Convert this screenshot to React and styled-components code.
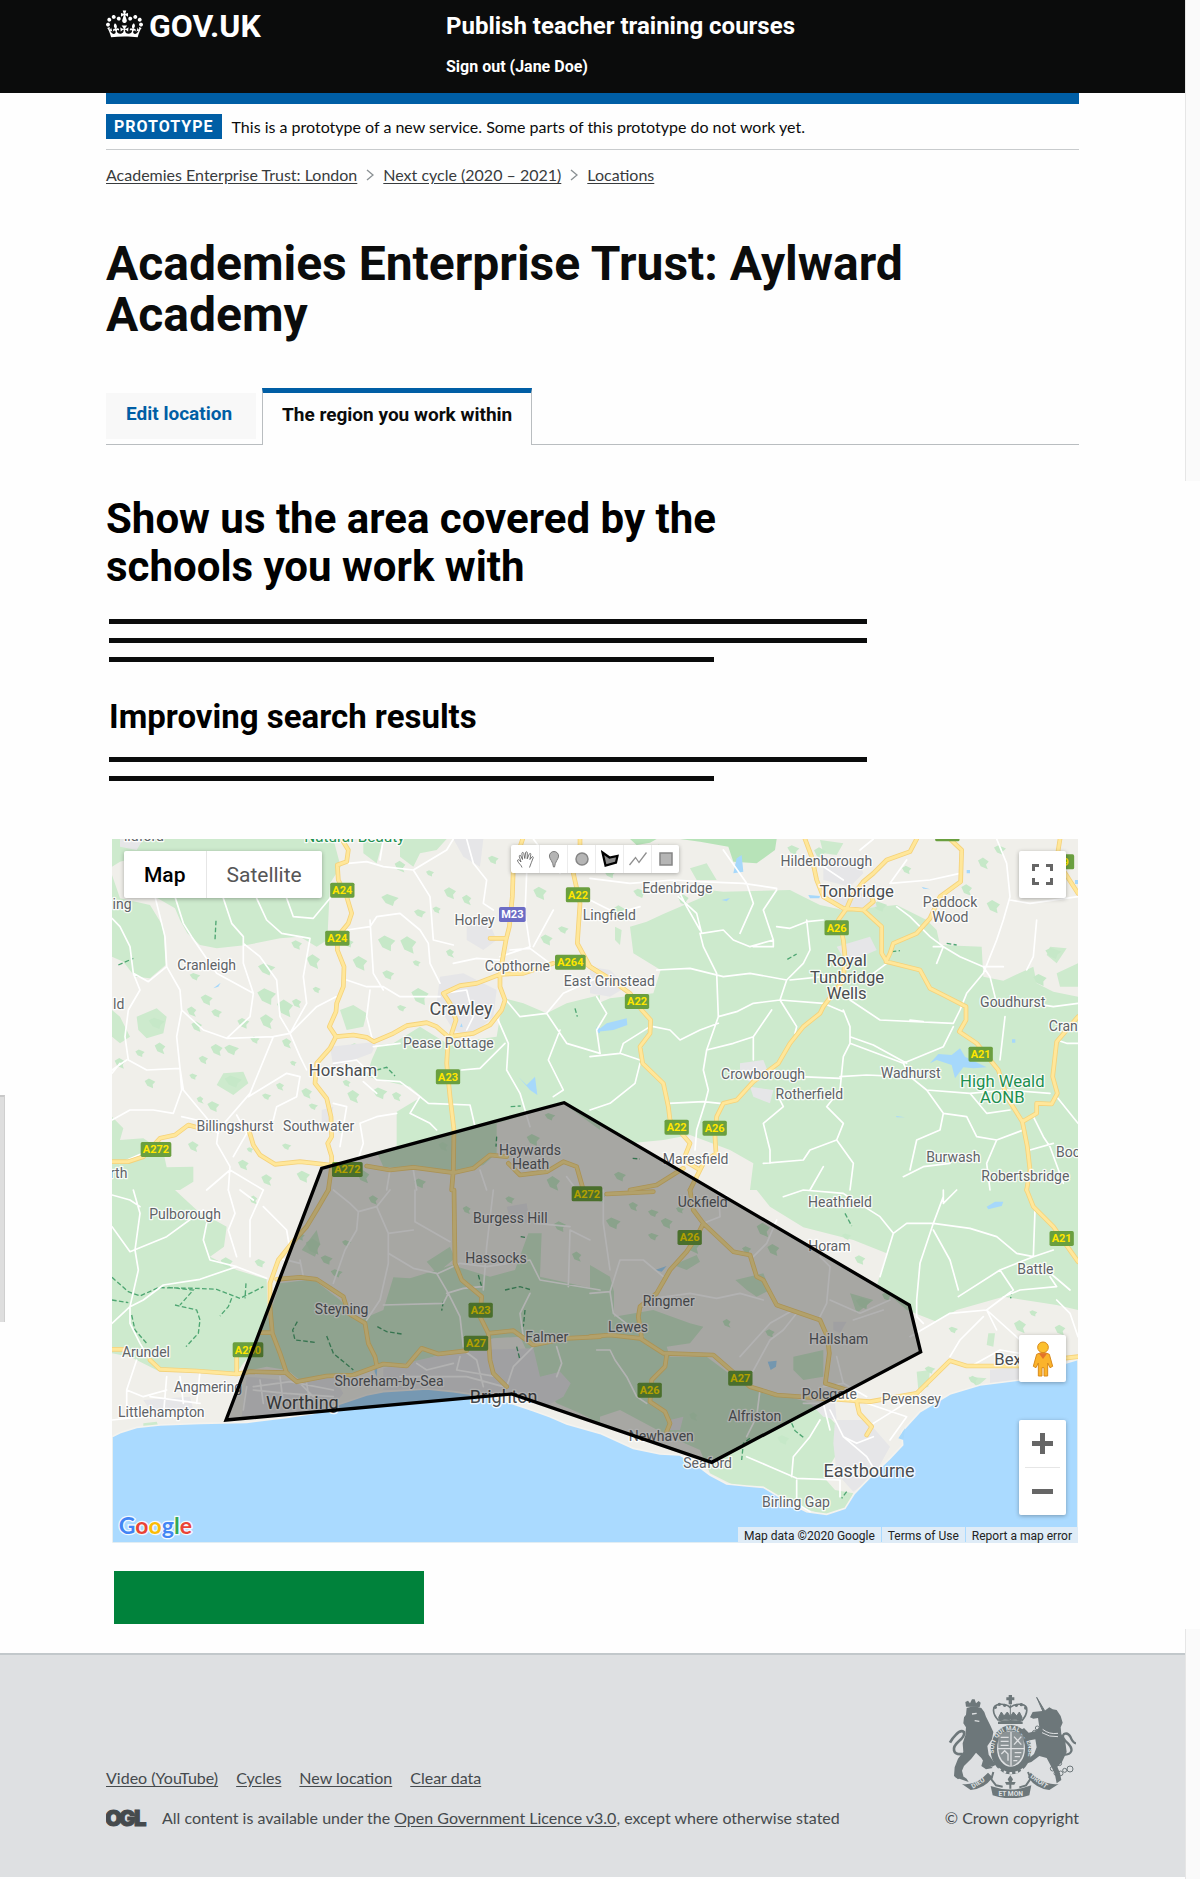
import React from "react";
import styled, { createGlobalStyle, css } from "styled-components";

const Global = createGlobalStyle`
  *, *::before, *::after { box-sizing: border-box; }
  body { margin: 0; background: #fefefe; color: #0b0c0c; font-family: Lato, "Liberation Sans", sans-serif; font-size: 16px; line-height: 20px; }
  h1, h2, h3, p, ul, ol { margin: 0; padding: 0; }
  ul, ol { list-style: none; }
  button { font: inherit; border: 0; padding: 0; margin: 0; cursor: pointer; }
  svg { display: block; }
`;
const display = `font-family: Roboto, "Liberation Sans", sans-serif; font-weight: 700;`;

/* ---------- page frame ---------- */
const Shell = styled.div`
  position: relative;
  display: grid;
  grid-template-columns: minmax(0, 1fr) 15px;
`;
const Page = styled.div`
  display: flex;
  flex-direction: column;
`;
const Gutter = styled.div`
  display: flex;
  flex-direction: column;
  justify-content: space-between;
`;
const Track = styled.div`
  height: ${(p) => p.$h}px;
  background: #fafafa;
  border-left: 1px solid #e6e6e6;
`;
const EdgeHandle = styled.div`
  position: absolute;
  left: 0;
  top: 1095px;
  width: 5px;
  height: 227px;
  background: #dedede;
  border-top: 2px solid #c8c8c8;
  border-right: 1px solid #cfcfcf;
`;
const Container = styled.div`
  width: calc(100% - 30px);
  max-width: 973px;
  margin: 0 auto;
`;

/* ---------- header ---------- */
const Header = styled.header`
  background: #0b0c0c;
  color: #fff;
  height: 93px;
`;
const HeaderGrid = styled(Container)`
  display: grid;
  grid-template-columns: 340px 1fr;
`;
const Brand = styled.a`
  ${display}
  display: flex;
  gap: 6px;
  padding-top: 10px;
  color: #fff;
  font-size: 32px;
  line-height: 32px;
  text-decoration: none;
`;
const ServiceNav = styled.nav`
  display: flex;
  flex-direction: column;
  align-items: flex-start;
  gap: 16px;
  padding-top: 11px;
`;
const ServiceLink = styled.a`
  ${display}
  color: #fff;
  text-decoration: none;
  font-size: ${(p) => (p.$large ? 24 : 16)}px;
  line-height: ${(p) => (p.$large ? 30 : 20)}px;
`;
const BlueBar = styled.div`
  height: 11px;
  background: #005ea5;
`;

/* ---------- phase banner and breadcrumbs ---------- */
const Phase = styled.div`
  display: flex;
  align-items: center;
  gap: 10px;
  padding: 10px 0;
  border-bottom: 1px solid #c8cbcd;
`;
const Tag = styled.strong`
  ${display}
  background: #005ea5;
  color: #fff;
  letter-spacing: 1px;
  padding: 0 8px;
  line-height: 25px;
`;
const Crumbs = styled.ol`
  display: flex;
  margin-top: 15px;
`;
const Crumb = styled.li`
  display: flex;
  align-items: center;
  svg { margin: 0 9px; }
`;
const TextLink = styled.a`
  color: ${(p) => p.$color || "#383b3d"};
  text-decoration: underline;
  text-underline-offset: 2px;
`;

/* ---------- headings, tabs ---------- */
const Title = styled.h1`
  ${display}
  margin-top: 53px;
  font-size: 48px;
  line-height: 51px;
`;
const Tabs = styled.ul`
  display: flex;
  align-items: flex-end;
  gap: 6px;
  margin-top: 48px;
  border-bottom: 1px solid #b9bdc0;
`;
const Tab = styled.li`
  a {
    ${display}
    display: block;
    padding: 0 24px 0 20px;
    font-size: 19px;
    text-decoration: none;
    line-height: 42px;
    height: 46px;
    color: #005ea5;
    background: #f8f8f8;
    margin-bottom: 5px;
  }
  ${(p) => p.$active && css`
    margin-bottom: -1px;
    a {
      height: 57px;
      margin: 0;
      padding: 0 19px;
      line-height: 44px;
      color: #0b0c0c;
      background: #fefefe;
      border: 1px solid #b9bdc0;
      border-top: 5px solid #005ea5;
      border-bottom: 0;
    }
  `}
`;
const Heading = styled.h2`
  ${display}
  max-width: 640px;
  margin-top: 50px;
  color: #000;
  font-size: 42px;
  line-height: 48px;
`;
const SubHeading = styled.h3`
  ${display}
  margin: 35px 0 20px;
  color: #000;
  font-size: 33px;
  line-height: 40px;
`;
const Copy = styled.div`
  padding-left: 3px;
`;
const Lines = styled.div`
  display: flex;
  flex-direction: column;
  gap: 14px;
  margin-top: ${(p) => (p.$first ? 28 : 0)}px;
`;
const Line = styled.div`
  height: 5px;
  max-width: ${(p) => (p.$short ? 605 : 758)}px;
  background: #0b0c0c;
`;

/* ---------- map widgets ---------- */
const MapFrame = styled.section`
  position: relative;
  margin: 58px 1px 0 6px;
  overflow: hidden;
  background: #aadaff;
  font-family: Roboto, sans-serif;
  > svg { width: 100%; height: auto; }
`;
const Floating = styled.div`
  position: absolute;
  display: flex;
  background: #fff;
  border-radius: 2px;
  box-shadow: 0 1px 4px rgba(0, 0, 0, 0.3);
`;
const TypeSwitch = styled(Floating)`
  top: 12px;
  left: 12px;
`;
const TypeButton = styled.button`
  height: 47px;
  padding: 0 20px;
  background: none;
  font-size: 21px;
  color: ${(p) => (p.$on ? "#000" : "#565656")};
  font-weight: ${(p) => (p.$on ? 500 : 400)};
  & + & { border-left: 1px solid #e6e6e6; }
`;
const DrawTools = styled(Floating)`
  top: 6px;
  left: 50%;
  margin-left: -84px;
`;
const DrawButton = styled.button`
  display: grid;
  place-items: center;
  width: 28px;
  height: 28px;
  background: none;
  & + & { border-left: 1px solid #ececec; }
`;
const SideControl = styled(Floating)`
  right: 12px;
  width: 47px;
  flex-direction: column;
  align-items: center;
  ${(p) => (p.$top ? `top: ${p.$top}px;` : `bottom: ${p.$bottom}px;`)}
`;
const SideButton = styled.button`
  display: grid;
  place-items: center;
  width: 35px;
  height: 47px;
  background: none;
  & + & { border-top: 1px solid #e6e6e6; height: 48px; }
`;
const Attribution = styled(Floating)`
  right: 0;
  bottom: 0;
  gap: 1px;
  background: none;
  box-shadow: none;
  font-size: 12px;
  line-height: 18px;
`;
const Credit = styled.span`
  height: 16px;
  padding: 0 6px;
  background: #dfecf7;
  color: #222;
  a { color: inherit; text-decoration: none; }
`;

/* ---------- action and footer ---------- */
const Submit = styled.button`
  display: block;
  width: 310px;
  height: 53px;
  margin: 28px 0 29px 8px;
  background: #00823b;
`;
const Footer = styled.footer`
  background: #dee0e2;
  border-top: 2px solid #c2c8cb;
  color: #454a4d;
  padding: 39px 0 49px;
  margin-bottom: 2px;
`;
const FooterRow = styled(Container)`
  display: flex;
  justify-content: space-between;
  align-items: flex-end;
`;
const FooterLinks = styled.ul`
  display: flex;
  gap: 18px;
  margin-bottom: 20px;
`;
const Licence = styled.div`
  display: flex;
  align-items: center;
  gap: 14px;
`;
const Copyright = styled.a`
  display: flex;
  flex-direction: column;
  align-items: center;
  gap: 10px;
  color: inherit;
  text-decoration: none;
`;

/* ---------- map artwork ----------
   Four tiles, each 1470 x 1080 units, three units to a pixel. */
const TILES = [[0, 0], [1470, 0], [0, 1080], [1470, 1080]];

const GREEN = [
  `M110,27H700L722,110 690,160 682,330 650,350 600,320 540,325 440,345 350,355 300,345 262,310 240,270 225,235 165,200 110,120 80,90 60,95 36,110V27Z
   M36,135L60,205 150,225 190,290 197,405 150,445 105,440 70,395 36,380Z
   M1215,505L1270,520 1340,550 1400,520 1500,495V900L1390,820 1190,880V970L1150,1005 1060,1030 850,1010 830,965 890,950V845L965,800 930,770 800,740 815,690 835,645 880,640 960,590 1040,640 1190,620 1200,560Z
   M36,860L70,895 60,930 130,925 190,965 200,1012 280,1010V1055L240,1080H36Z
   M36,540L60,560 90,620 60,640 36,620Z M110,560L170,535 200,560 190,610 140,625 115,600Z M370,730L430,725 445,760 400,795 350,765Z
   M790,27H850L830,100 790,70Z M900,27H1040L1010,60 960,70 940,110 900,80Z M720,540L760,525 800,550 790,590 740,600Z`,
  `M120,290L170,275 220,252 330,205 355,180 400,185 600,180 640,200 690,225 760,240 850,232 920,225 1010,270 1040,300 1050,345 1175,350 1180,440 1240,452 1330,410 1340,460 1390,485 1464,500V1080H480L490,1000 420,960 300,915 220,930 120,940 0,860V530L60,505 190,490 212,420 130,370Z
   M1380,350L1430,355 1400,400 1370,375Z M690,30L760,40 740,75 700,70Z M1400,430L1464,400V470L1410,470Z M75,290L95,300 90,345 75,330Z M300,115L350,100 380,150 320,150Z`,
  `M36,0H225L290,60 380,110 372,170 330,200 410,240 500,268 505,430 430,520 410,550 180,545 90,500 36,490Z
   M540,280L640,268 720,330 780,390 850,360 880,262 930,265 1010,240 1055,225 1170,260 1245,240 1285,130 1325,130 1320,260 1500,300V700L1430,665 1370,640 1330,590 1310,545 1260,440 1180,445 1080,480 1000,500 930,525 850,530 700,560 600,570 560,540 500,530 430,545 500,400Z
   M605,180L650,120 660,160 645,200Z M980,215L1050,170 1065,205 1010,250Z M130,700L170,695 175,708 130,712Z`,
  `M0,225L60,260 72,305 72,380 190,360 300,400 340,410 300,460 230,470 240,500 350,500 430,560 520,600 650,635 690,652 735,700V800L700,860 735,900 790,910 770,955 700,975 600,940 520,890 440,890 360,850 330,780 240,740 90,660 0,690Z
   M500,0H1464V360L1400,345 1240,320 1100,360 1040,395 950,360 862,282 890,190 790,150 640,112 540,50Z
   M436,270L520,250 540,300 500,320 470,300Z M610,500L700,480V560L640,570 610,540Z M780,310L850,330 800,370Z M980,545L1020,540 1015,590 985,600Z M250,225L320,195 330,215 290,240Z M1135,560L1190,565 1160,590Z M1195,430L1215,430 1210,470 1190,465Z`,
];
const DARK_GREEN = ["", "M270,27H560L555,60 500,100 430,95 415,50 330,35Z M120,27H200L180,38 140,45Z", "", ""];
const URBAN = [
  `M1020,440L1090,430 1190,480 1180,560 1110,620 1060,600 1010,520Z M1100,280L1160,260 1190,330 1150,360 1100,330Z M690,650L830,635 815,670 760,690 700,710Z M665,840L700,830 690,880 665,880Z M60,27H130L110,60 60,50Z M1060,27H1150L1140,110 1090,80Z`,
  `M0,410L60,420 110,470 60,500 0,490Z M700,100L800,80 820,130 780,170 700,150Z M720,190L850,190 860,230 750,240Z M740,350L840,320 860,360 770,400Z M450,700L520,690 540,740 490,760 450,740Z M480,770L550,780 540,820 490,800Z`,
  `M440,560L600,575 700,560 730,610 690,660 425,680Z M850,535L1000,500 1100,480 1300,475 1320,560 1380,545 1412,580 1390,620 1335,650 1290,640 1180,612 850,600Z M1220,50L1280,40 1290,100 1230,90Z M130,630L270,620 280,660 150,660Z`,
  `M735,690L830,690 900,770 850,860 790,905 740,850 730,760Z M240,690L280,680 270,720 240,720Z M1200,540L1290,530V570L1200,580Z M730,395L770,395 750,430 730,420Z M660,640L735,640 740,690 700,680Z`,
];
const WATER = [
  `M1255,740L1280,765 1305,740 1312,795 1290,780Z M340,475L362,458 355,470Z M1490,590L1500,595V610L1488,605Z M1080,590L1085,580 1088,592Z`,
  `M18,605L50,580 110,565 112,585 70,600 22,605Z M440,85L455,75 460,125 430,130Z M1020,700L1045,672 1085,675 1110,655 1125,680 1190,712 1150,715 1120,712 1095,745 1085,705 1040,690Z M655,195L690,198 688,205 660,205Z M395,210L420,204 410,214Z M995,170L1020,178 1000,176Z M1130,120h10v10h-10Z M1455,150h9v12h-9Z M1266,628h10v10h-10Z M918,858L945,862 920,862Z`,
  `M822,500L832,530 830,560 824,545Z`,
  `M533,515L560,512 558,530 542,540Z M195,240L230,228 215,245Z M1190,50L1215,35 1240,35 1235,48 1195,58Z M925,745L945,715 940,750Z`,
];
const SEA =
  "M36,1820L60,1808 110,1792 180,1785 300,1780 440,1777 560,1762 640,1750 720,1722 800,1695 850,1685 980,1677 1060,1685 1180,1702 1240,1722 1300,1742 1350,1760 1400,1782 1500,1810 1600,1855 1680,1872 1740,1875 1790,1905 1830,1935 1880,1962 1940,1968 1990,1972 2070,2020 2120,2045 2180,2053 2235,2035 2262,1992 2310,1942 2370,1885 2408,1845 2405,1805 2460,1745 2550,1692 2640,1665 2760,1650 2860,1610 2934,1588V2139H36Z";

const MINOR = [
  `M36,265L60,290 90,350 100,430 145,455 200,410 195,320 165,200 M100,430L120,480 85,540 75,620 85,690 140,720 240,715 M36,720L80,690 M200,410L240,480 245,540 230,620 240,715 245,780 220,850 160,840 90,840 36,870
   M225,200L250,280 275,320 350,430 460,490 450,560 380,625 310,600 245,540 M370,205L395,280 430,320 430,400 460,490 M470,205L500,270 545,310 630,325 610,440 620,520 570,610 M560,205L580,260 640,265 690,205
   M430,340L480,380 530,450 540,560 570,610 650,530 708,500 M380,625L520,620 570,610 600,680 620,720 M520,620L450,790 355,900 350,940 390,1010 385,1080 M445,800L560,730 600,740 590,800 530,830 520,870 M240,715L250,780 350,900
   M690,205L720,160 M745,100L800,95 850,110 940,120 1040,60 1060,27 M740,300L810,290 830,260 900,250 960,300 985,340 990,400 1020,460 M740,450L800,470 850,470 900,500 1020,500 M810,270L820,430 850,480 M940,120L990,200 1000,330 1060,345
   M850,27L840,90 M820,640L800,560 810,480 M1100,27L1120,100 1160,150 1150,220 1180,240 M1280,130L1275,250 1290,350 1200,380 M1230,360L1290,355 1350,400 M1300,27L1340,80 1380,130 M1360,240L1300,350
   M1030,490L1100,480 1120,560 1100,600 M1060,400L1130,385 1200,390 M1190,560L1225,640 1220,720 1260,790 1290,890 M1210,500L1260,560 1340,550 1400,640 1500,670 M1340,550L1390,490 1500,440 M1380,600L1345,690 1390,780 1360,800
   M700,700L770,690 830,750 900,755 960,800 985,820 1110,825 1125,890 M790,755L830,790 M820,650L900,640 M1085,720L1140,715 1215,640 M960,800L930,850 990,880 1010,900 M780,880L830,860 890,850 M780,880L790,940 770,1000
   M700,820L740,830 720,950 M410,855L440,910 M440,910L400,980 M355,910L290,870 245,860 M36,730L60,700 M60,1000L150,960 M320,1080L390,1020 490,1080 M1400,1040L1430,1080 M870,1020L860,1080 M1140,1020L1160,1080 M940,1020L950,1080`,
  `M0,210L40,230 80,250 150,230 M0,145L120,160 250,150 330,155 460,160 560,175 M250,150L290,230 330,300 M265,200L320,250 335,310 400,300 430,330 480,350 550,330 520,240 560,180 M330,310L340,350 380,430 385,560 350,660 340,720 355,780 345,820
   M450,310L490,220 470,160 400,60 M550,330L550,350 490,350 M560,290L600,295 650,275 700,270 M200,420L300,415 400,440 480,430 590,450 640,400 660,360 650,270 M590,450L570,510 620,590 615,610 M385,560L440,545 490,520 570,510 700,520 760,545 
   M190,590L240,600 270,630 330,600 385,580 M0,680L90,670 150,690 M135,760L150,700 M135,760L60,820 0,840 M235,820L340,815 390,820 M345,820L320,900 315,960 M490,620L545,540 M350,660L430,640 490,620 490,690
   M600,450L700,440 760,460 M780,510L870,570 1090,580 1110,540 1130,490 1180,430 1220,330 1240,270 1260,200 1250,100 1220,27 M760,540L780,590 780,640 940,700 1060,650 1090,590 M780,620L850,645 950,700 M940,700L960,740 1010,780 1060,850 1050,900 980,930 960,1020
   M750,740L830,735 940,740 M780,640L760,680 750,780 710,830 760,880 740,930 660,960 640,990 520,1000 M550,720L630,740 750,745 M560,790L580,830 520,880 540,960 540,1000 M850,430L890,400 M1030,350L1060,350 1110,380 1180,410 1240,410 
   M920,230L960,260 1020,320 1060,350 M1060,350L1040,400 M1180,410L1200,440 1220,520 M1330,520L1390,530 1464,520 M1245,560L1230,690 M1060,850L1130,860 1160,920 1220,930 1300,900 M1010,780L1140,790 1250,780 1380,790 
   M1140,790L1190,850 1260,840 M1330,860L1360,920 1380,950 1420,1060 M1320,960L1390,940 M1400,800L1464,880 M940,1040L1000,1010 1080,1000 M660,1080L700,1010 M780,1080L790,1000 740,930 M1220,930L1190,1000 1200,1080
   M1260,210L1320,220 1464,200 M1340,270L1330,380 1310,420 M810,60L850,27 M700,110L760,150 M900,160L1020,150 1110,130 M950,90L900,160 M20,500L50,550 20,600 30,670 M180,590L100,640 90,670 M1400,630L1430,640 1464,640 M960,570L1000,575`,
  `M100,0L120,70 105,180 115,240 90,350 90,400 120,460 150,510 M36,110L90,185 200,140 310,60 M36,400L90,350 130,330 190,285 300,268 410,230 500,265 M320,100L310,150 330,210 410,230 M385,0L405,70 385,120 410,200 M490,0L450,90 450,200 
   M490,50L560,120 570,180 M36,15L90,30 120,50 M420,0L460,30 M700,0L750,40 775,65 770,120 735,180 700,280 M775,65L830,50 870,0 M830,50L865,130 865,220 840,330 800,390 M865,130L940,120 M945,0L945,95 1050,155 M865,190L940,235 1010,250 1045,310 1030,340 850,345
   M1015,250L1080,220 1160,230 1290,210 1320,270 1500,300 M1040,310L1090,295 1145,290 M1160,170L1180,0 M1160,170L1150,300 M1045,310L1080,380 1090,470 M1410,120L1405,290 M1410,120L1470,150 M1310,100L1410,110 M1290,310L1260,370 1270,440
   M1305,465L1240,530 1220,590 M1370,470L1385,520 1370,560 M1090,480L1130,510 1150,590 M1080,500L1070,540 1190,560 M900,560L1100,560 1210,590 M950,520L980,540 1060,520 M460,590L570,575 700,600 M460,600L560,610 700,620 M480,570L490,640 M540,560L550,640 M620,580L630,640
   M440,590L430,660 M80,600L130,620 200,600 M36,690L130,680 M110,510L80,600 80,680 M150,620L300,640 M200,560L190,680 M240,560L250,640 M300,545L290,640 M600,210L610,260 M540,205L600,220 M570,550L640,620`,
  `M0,310L60,305 70,370 160,440 M60,305L90,210 160,210 220,260 M40,0L40,100 60,240 M190,325L300,310 380,325 450,310 520,330 M20,480L60,480 75,510 110,560 140,620 170,640 M450,500L540,400 610,360 M480,560L540,450 580,420 620,370
   M510,600L500,680 470,740 M690,380L710,340 720,230 690,200 M720,330L810,370 900,330 M790,390L880,360 M560,90L530,160 490,200 M385,0L390,80 340,100 M740,500L760,580 830,620 M760,580L700,590 M580,20L640,0 760,10 870,80 910,130 M760,10L800,40 
   M910,130L870,260 M910,130L950,100 1030,100 1140,115 1220,140 1280,190 1330,200 M1060,20L1030,100 990,220 980,330 980,380 M1335,60L1330,200 M1100,0L1060,40 1060,0 M1030,120L1080,210 1105,300 M1105,320L1230,240 1330,200 1390,180 M1230,240L1270,300 1190,360 1220,420 
   M1380,260L1400,290 1290,300 1240,320 M1370,240L1440,300 M960,440L1080,370 1190,360 M980,380L1000,400 M1080,500L1110,450 1180,380 M1190,360L1290,450 1300,500 M1140,530L1230,480 1290,490 M1400,330L1440,370 1464,440 
   M720,660L760,740 830,800 860,850 M690,690L660,740 610,800 605,860 M470,800L540,830 620,865 750,870 M620,870L620,940 660,965 M750,870L750,920 M640,640L700,640 720,720 M830,640L950,680 900,750 M850,700L930,650 990,610 M760,740L800,760 850,740`,
];
const MAJOR = [
  `M725,27L745,60 740,95 712,105 715,150 740,200 755,250 745,280 712,320V360L732,410 730,470 710,520 708,545 688,590 708,620 690,655 650,700 645,760 680,805 693,860 695,920 683,940 695,980V1010L685,1080
   M708,620L760,615 800,622 822,635 880,610 920,587 980,578 1010,590 1045,620 1120,610 1170,585 1205,540 1215,510 1200,470V430 M1055,610L1068,570 1050,520 1030,490 1080,467 1130,460 1200,433 1270,430 1360,400
   M1268,27L1240,110 1237,200 1228,290 1218,330 1200,430 M1170,325H1218 M1440,27V60L1420,130 1440,220 1432,340 1470,410 1500,430 M1045,620L1040,700 1050,800 1062,900 1060,1020 1055,1080
   M36,995H85L130,980 180,925 225,915 265,885 290,892 M448,905L460,945 480,975 525,1003 600,995 690,1005 M800,1008L870,1020 940,1012 1060,1028 1120,1015 1170,975 1220,980 M1225,1000L1260,1035 1340,1025 1390,995 1430,1010 1450,1080`,
  `M645,27L665,80 680,150 700,200 760,235 820,240 875,290V370L890,395 990,420 1020,475 1060,495 1128,530V570L1108,605 1160,640 1225,720 1250,800 1297,875 1312,950 1320,1020 1310,1080
   M980,27L960,65 890,90 850,130 820,155 M770,235L785,200 820,155 M820,240L850,215 845,200 M1080,27L1115,60 1112,155 1050,200 1020,265 980,310 910,340 900,370 888,395
   M770,235L745,270 760,330 765,380 760,450 700,530 690,550 640,590 600,640 565,700 490,755 440,810 400,820 380,860 375,920 378,970 340,1000 300,1080
   M-30,390L0,410 50,440 120,490 155,540 182,570 180,610 150,650 158,700 220,760 235,830 240,870 300,940 280,990 330,1020 M120,1080L200,1065 280,1015 M1410,27L1400,90 1464,190 M1464,560L1400,635 1388,740 1402,790 1385,822 1340,820V850L1297,875`,
  `M685,0L650,60 620,110 575,160 535,210 510,280V350L517,430 540,490 560,550 590,575 M530,268L600,262 650,268 730,320 745,370 795,400 805,460 825,500 830,525
   M36,478H80 M150,510L180,538 290,543 410,552 450,545 560,548 590,575 680,558 760,555 850,522 920,528 965,475 1015,492 1100,482 M410,552V500 M480,428H517
   M1062,0L1065,220 1085,270 1145,320 1140,380 1165,430 1170,510 1180,550 1220,590 M1165,430L1240,422 1300,465 1400,445 1500,440`,
  `M0,440L60,435 150,445 220,490 370,495 480,590 560,615 700,625 840,635 980,610 1080,512 1130,528H1290 M1420,505L1464,500 M300,0L310,60 340,100 430,185 480,195 500,260 520,270 560,345 690,390 712,440 718,490 706,580 770,600
   M340,100L320,140 290,185 240,240 200,310 150,350 145,380 155,445 M230,495L225,530 185,570 180,635 225,665 240,700 230,725 M800,635L808,670 845,710 830,735 M1310,0L1330,50 1390,110 1464,215 M50,12L190,5`,
];
const TRAILS = [
  "M348,272L345,330 M55,405L100,385 M830,720L860,712 885,738 M1425,535L1432,560 M1232,830L1262,828 M1190,920L1188,950",
  "M592,388L620,372 M1070,340L1100,345 M905,365L930,362 M128,985L150,987",
  "M36,262L85,305 120,318 175,293 290,295 350,298 420,325 490,290 M205,292L280,300 240,345 M225,345L290,360 300,390 295,430 258,470 M395,325L385,350 360,378 M438,280L435,325 M36,330L85,338 M95,375L105,420 140,460 M592,395L578,420 585,450 645,457 M680,438L700,490 760,540 M832,410L860,425 905,432 M1135,255L1145,290 M1030,335L1025,362 M1215,300L1260,290 1295,300 M1275,360L1270,410 M1250,470L1260,510 M1262,140L1275,142",
  "M605,700L615,722 640,742 M480,745L460,760 455,810 M765,70L785,108 M1265,300L1262,325 M770,905L755,925",
];

/* woodland blocks scattered over the farmland: x, y, size */
const WOODS = [
  [500, 418, 26], [590, 345, 16], [640, 395, 20], [745, 340, 16], [780, 400, 22], [870, 210, 26], [860, 340, 26], [925, 345, 24], [865, 435, 18], [960, 500, 26], [905, 535, 14], [500, 500, 28], [555, 535, 24], [650, 480, 12], [590, 520, 14],
  [285, 440, 16], [320, 510, 18], [275, 545, 14], [350, 550, 16], [290, 590, 16], [170, 580, 24], [430, 580, 18], [500, 575, 20], [465, 630, 14], [350, 660, 18], [395, 660, 22], [310, 690, 14], [180, 655, 16], [120, 670, 14], [60, 700, 16],
  [400, 755, 26], [150, 760, 16], [560, 640, 14], [580, 700, 10], [540, 770, 12], [500, 800, 14], [340, 830, 18], [300, 810, 10], [280, 740, 12], [620, 790, 16], [640, 830, 14], [740, 760, 12], [760, 800, 18], [840, 790, 22], [890, 800, 14],
  [770, 655, 22], [740, 670, 16], [900, 110, 16], [990, 130, 12], [1050, 190, 18], [960, 250, 18], [1010, 240, 12], [1100, 210, 14], [1180, 90, 16], [1320, 190, 20], [1390, 300, 16], [1340, 330, 18], [1050, 370, 12], [950, 400, 12],
  [430, 1005, 16], [560, 950, 14], [610, 1040, 20], [500, 1050, 16], [450, 960, 10], [280, 950, 16], [330, 900, 12], [720, 900, 12], [790, 1040, 18], [960, 1060, 18], [1030, 950, 14], [1350, 860, 16], [1300, 930, 20], [1360, 1060, 20],
  [1530, 130, 18], [1560, 250, 24], [1620, 190, 20], [1680, 60, 18], [1750, 210, 16], [2080, 60, 18], [2160, 70, 18], [2340, 230, 22], [2420, 120, 14], [2600, 180, 16], [2700, 60, 18], [2680, 230, 20], [2860, 370, 24], [2820, 450, 20], [2650, 100, 16],
  [1540, 1180, 22], [1600, 1130, 14], [1660, 1150, 16], [1700, 1180, 18], [1780, 1250, 20], [1560, 1040, 18], [1500, 1100, 20], [1660, 1220, 16], [1740, 1140, 12], [1990, 1200, 20], [1940, 1260, 14], [2020, 1260, 18], [2240, 1220, 14], [2280, 1290, 16],
  [640, 1250, 22], [680, 1290, 18], [820, 1110, 14], [710, 1330, 18], [600, 1220, 14], [460, 1110, 12], [480, 1300, 16], [380, 1300, 18], [1440, 1100, 14], [1380, 1190, 18], [1430, 1280, 14], [1230, 1110, 14], [1100, 1140, 12], [740, 1240, 14],
  [2010, 1510, 14], [1880, 1480, 12], [2290, 1420, 22], [2360, 1400, 14], [2560, 1500, 14], [2620, 1650, 14], [2760, 1490, 18], [2800, 1450, 12], [2880, 1500, 16], [2490, 1620, 16], [2330, 1830, 12], [1780, 1760, 12], [2050, 1830, 18],
];
const wood = ([x, y, s], i) => {
  const k = (i * 7) % 5;
  const a = s * (0.7 + k * 0.1);
  return `M${x - s},${y - a / 2}L${x - s / 3 + k},${y - a} ${x + s},${y - a / 3} ${x + s / 2},${y + a / 4} ${x + s / 3 + k * 2},${y + a} ${x - s / 2},${y + a / 2}Z`;
};

/* place names: text, centre x, baseline y, size, colour */
const SMALL = 42;
const TOWN = 50;
const BIG = 54;
const PLACES = [
  ["ildford", 132, 32, SMALL], ["ing", 66, 237, SMALL], ["Cranleigh", 320, 420, SMALL], ["ld", 56, 538, SMALL], ["Horley", 1124, 286, SMALL], ["Copthorne", 1252, 423, SMALL],
  ["Crawley", 1083, 554, BIG], ["Pease Pottage", 1045, 655, SMALL], ["Horsham", 729, 738, TOWN], ["Billingshurst", 405, 902, SMALL], ["Southwater", 656, 902, SMALL],
  ["Haywards", 1290, 976, SMALL], ["Heath", 1292, 1018, SMALL], ["rth", 56, 1045, SMALL],
  ["Lingfield", 1528, 271, SMALL], ["Edenbridge", 1732, 190, SMALL], ["Hildenborough", 2179, 109, SMALL], ["Tonbridge", 2270, 202, TOWN], ["Paddock", 2550, 232, SMALL], ["Wood", 2551, 275, SMALL],
  ["East Grinstead", 1528, 468, SMALL], ["Royal", 2240, 408, TOWN], ["Tunbridge", 2241, 458, TOWN], ["Wells", 2240, 508, TOWN], ["Goudhurst", 2738, 532, SMALL], ["Cran", 2890, 602, SMALL],
  ["Crowborough", 1989, 746, SMALL], ["Rotherfield", 2128, 807, SMALL], ["Wadhurst", 2432, 743, SMALL], ["Maresfield", 1787, 1003, SMALL], ["Burwash", 2560, 997, SMALL], ["Boc", 2904, 980, SMALL], ["Robertsbridge", 2776, 1053, SMALL],
  ["Pulborough", 255, 1166, SMALL], ["Burgess Hill", 1231, 1180, SMALL], ["Hassocks", 1188, 1300, SMALL], ["Steyning", 725, 1452, SMALL], ["Falmer", 1340, 1535, SMALL], ["Arundel", 138, 1581, SMALL], ["Angmering", 324, 1687, SMALL],
  ["Shoreham-by-Sea", 867, 1669, SMALL], ["Worthing", 607, 1736, BIG], ["Brighton", 1211, 1718, BIG], ["Littlehampton", 184, 1761, SMALL],
  ["Uckfield", 1808, 1130, SMALL], ["Heathfield", 2220, 1130, SMALL], ["Horam", 2188, 1264, SMALL], ["Battle", 2806, 1331, SMALL], ["Ringmer", 1706, 1429, SMALL], ["Lewes", 1584, 1507, SMALL], ["Hailsham", 2216, 1542, SMALL],
  ["Bex", 2724, 1604, TOWN], ["Polegate", 2188, 1708, SMALL], ["Pevensey", 2434, 1722, SMALL], ["Alfriston", 1964, 1774, SMALL], ["Newhaven", 1684, 1834, SMALL], ["Seaford", 1823, 1915, SMALL], ["Eastbourne", 2307, 1942, BIG], ["Birling Gap", 2088, 2032, SMALL],
  ["Natural Beauty", 763, 36, 46, "#1d8f4f"], ["High Weald", 2707, 771, TOWN, "#1d8f4f"], ["AONB", 2707, 820, TOWN, "#1d8f4f"],
];
const SHIELDS = [
  ["A24", 727, 181], ["A24", 712, 325], ["M23", 1237, 254, "#6c6cc5"], ["A22", 1434, 195], ["A264", 1411, 397], ["A23", 1044, 741], ["A272", 168, 959], ["A272", 742, 1019],
  ["A26", 2210, 294], ["A22", 1611, 515], ["A21", 2642, 673], ["A22", 1730, 892], ["A26", 1844, 895], ["A9", 2886, 96], ["A21", 2542, 12],
  ["A272", 1461, 1092], ["A23", 1142, 1441], ["A27", 1128, 1540], ["A280", 444, 1560], ["A26", 1769, 1223], ["A26", 1649, 1681], ["A27", 1921, 1645], ["A21", 2885, 1226],
];

const Tiles = ({ paths, ...rest }) => (
  <g {...rest}>
    {paths.map((d, i) => d && <path key={i} d={d} transform={`translate(${TILES[i][0]} ${TILES[i][1]})`} />)}
  </g>
);

const MapArt = () => (
  <svg viewBox="36 27 2898 2112" role="img" aria-label="Map of Sussex with the selected region" fontFamily="Roboto, sans-serif">
    <rect x="36" y="27" width="2898" height="2112" fill="#f0efea" />
    <Tiles paths={GREEN} fill="#cdeacd" />
    <Tiles paths={DARK_GREEN} fill="#b7e3b8" />
    <path d={WOODS.map(wood).join("")} fill="#c6e8c8" />
    <Tiles paths={URBAN} fill="#e6e6e8" />
    <path d={SEA} fill="#aadaff" stroke="#f4f3ef" strokeWidth="5" />
    <Tiles paths={WATER} fill="#a6d8fb" />
    <Tiles paths={TRAILS} fill="none" stroke="#4ea672" strokeWidth="4" strokeDasharray="14 7" />
    <Tiles paths={MINOR} fill="none" stroke="#fff" strokeWidth="5" strokeLinejoin="round" strokeLinecap="round" />
    <Tiles paths={MAJOR} fill="none" stroke="#f5d27a" strokeWidth="14" strokeLinejoin="round" strokeLinecap="round" />
    <Tiles paths={MAJOR} fill="none" stroke="#ffe79a" strokeWidth="9" strokeLinejoin="round" strokeLinecap="round" />
    {SHIELDS.map(([t, x, y, c], i) => {
      const w = t.length > 3 ? 92 : t[0] === "M" ? 80 : 73;
      return (
        <g key={i}>
          <rect x={x - w / 2} y={y - 23} width={w} height="45" rx="5" fill={c || "#6a9f3f"} />
          <text x={x} y={y + 11} fontSize="33" fontWeight="700" textAnchor="middle" fill={c ? "#fff" : "#ffe600"}>{t}</text>
        </g>
      );
    })}
    <g textAnchor="middle" stroke="#fff" strokeWidth="8" strokeLinejoin="round" strokeOpacity="0.85" paintOrder="stroke">
      {PLACES.map(([t, x, y, s, c]) => (
        <text key={t} x={x} y={y} fontSize={s} fill={c || (s === SMALL ? "#5f6367" : "#4a4d50")}>{t}</text>
      ))}
    </g>
    <path d="M1392,818L2428,1425 2462,1566 1835,1897 1235,1692 378,1770 665,1015Z" fill="#000" fillOpacity="0.3" stroke="#000" strokeWidth="10" />
    <text x="56" y="2112" fontSize="69" fontWeight="700" fontFamily="Lato, sans-serif" stroke="#fff" strokeWidth="8" strokeOpacity="0.85" paintOrder="stroke">
      <tspan fill="#4285f4">G</tspan><tspan fill="#ea4335">o</tspan><tspan fill="#fbbc05">o</tspan><tspan fill="#4285f4">g</tspan><tspan fill="#34a853">l</tspan><tspan fill="#ea4335">e</tspan>
    </text>
  </svg>
);

/* ---------- icons ---------- */
const Crown = () => (
  <svg width="37" height="28" viewBox="0 0 132 97" fill="#fff" aria-hidden="true">
    <path d="M25 30.2c3.5 1.5 7.7-.2 9.1-3.7 1.5-3.6-.2-7.8-3.9-9.2-3.6-1.4-7.6.3-9.1 3.9-1.4 3.5.3 7.5 3.9 9zM9 39.5c3.6 1.5 7.8-.2 9.2-3.7 1.5-3.6-.2-7.8-3.9-9.1-3.6-1.5-7.6.2-9.1 3.8-1.4 3.5.3 7.5 3.8 9zM4.4 57.2c3.5 1.5 7.7-.2 9.1-3.8 1.5-3.6-.2-7.7-3.9-9.1-3.5-1.5-7.6.3-9.1 3.8-1.4 3.5.3 7.6 3.9 9.1zm38.3-21.4c3.5 1.5 7.7-.2 9.1-3.8 1.5-3.6-.2-7.7-3.9-9.1-3.6-1.5-7.6.3-9.1 3.8-1.3 3.6.4 7.7 3.9 9.1zm64.4-5.6c-3.6 1.5-7.8-.2-9.1-3.7-1.5-3.6.2-7.8 3.8-9.2 3.6-1.4 7.7.3 9.2 3.9 1.3 3.5-.4 7.5-3.9 9zm15.9 9.3c-3.6 1.5-7.7-.2-9.1-3.7-1.5-3.6.2-7.8 3.7-9.1 3.6-1.5 7.7.2 9.2 3.8 1.5 3.5-.3 7.5-3.8 9zm4.7 17.7c-3.6 1.5-7.8-.2-9.2-3.8-1.5-3.6.2-7.7 3.9-9.1 3.6-1.5 7.7.3 9.2 3.8 1.3 3.5-.4 7.6-3.9 9.1zM89.3 35.8c-3.6 1.5-7.8-.2-9.2-3.8-1.4-3.6.2-7.7 3.9-9.1 3.6-1.5 7.7.3 9.2 3.8 1.4 3.6-.3 7.7-3.9 9.1zM69.7 17.7l8.9 4.7V9.3l-8.9 2.8c-.2-.3-.5-.6-.9-.9L72.4 0H59.6l3.5 11.2c-.3.3-.6.5-.9.9l-8.8-2.8v13.1l8.8-4.7c.3.3.6.7.9.9l-5 15.4v.1c-.2.8-.4 1.6-.4 2.4 0 4.1 3.1 7.5 7 8.1h.2c.3 0 .7.1 1 .1.4 0 .7 0 1-.1h.2c4-.6 7.1-4.1 7.1-8.1 0-.8-.1-1.7-.4-2.4V34l-5.1-15.4c.4-.2.7-.6 1-.9zM66 92.8c16.9 0 32.8 1.1 47.1 3.2 4-16.9 8.9-26.7 14-33.5l-9.6-3.4c1 4.9 1.1 7.2 0 10.2-1.5-1.4-3-4.3-4.2-8.7L108.6 76c2.8-2 5-3.2 7.5-3.3-4.4 9.4-10 11.9-13.6 11.2-4.3-.8-6.3-4.6-5.6-7.9 1-4.7 5.7-5.9 8-.5 4.3-8.7-3-11.4-7.6-8.8 7.1-7.2 7.9-13.5 2.1-21.1-8 6.1-8.1 12.3-4.5 20.8-4.7-5.4-12.1-2.5-9.5 6.2 3.4-5.2 7.9-2 7.2 3.1-.6 4.3-6.4 7.8-13.5 7.2-10.3-.9-10.9-8-11.2-13.8 2.5-.5 7.1 1.8 11 7.3L80.2 60c-4.1 4.4-8 5.3-12.3 5.4 1.4-4.4 8-11.6 8-11.6H55.5s6.4 7.2 7.9 11.6c-4.2-.1-8-1-12.3-5.4l1.4 16.4c3.9-5.5 8.5-7.7 10.9-7.3-.3 5.8-.9 12.8-11.1 13.8-7.2.6-12.9-2.9-13.5-7.2-.7-5 3.8-8.3 7.1-3.1 2.7-8.7-4.6-11.6-9.4-6.2 3.7-8.5 3.6-14.7-4.6-20.8-5.8 7.6-5 13.9 2.2 21.1-4.7-2.6-11.9.1-7.7 8.8 2.3-5.5 7.1-4.2 8.1.5.7 3.3-1.3 7.1-5.7 7.9-3.5.7-9-1.8-13.5-11.2 2.5.1 4.7 1.3 7.5 3.3l-4.7-15.4c-1.2 4.4-2.7 7.2-4.3 8.7-1.1-3-.9-5.3 0-10.2l-9.5 3.4c5 6.9 9.9 16.7 14 33.5 14.8-2.1 30.8-3.2 47.7-3.2z" />
  </svg>
);
const Chevron = () => (
  <svg width="8" height="12" viewBox="0 0 8 12" fill="none" stroke="#8b9194" strokeWidth="1.4" aria-hidden="true"><path d="M1 1l6 5-6 5" /></svg>
);
const TOOLS = [
  ["Stop drawing", <path key="h" d="M5 16.500C4.500 14 1.500 12.500.6 10c-.4-1.500 1-1.800 1.800-.8L4 11 2.300 5.500c-.3-1.300 1.100-1.700 1.600-.5L5.500 8.500 4.900 2.500c0-1.300 1.500-1.400 1.800-.2L7.800 7.500 8.600 1.600c.2-1.200 1.700-1 1.700.2L10.200 7.800 12.300 3c.5-1.100 1.800-.6 1.500.5L12.900 8.500 14.800 6c.7-.9 1.800-.2 1.400.8C14.500 10.500 14 13 12.500 16.500" fill="#fff" stroke="#555" strokeWidth=".8" />],
  ["Add a marker", <path key="m" d="M8 .5a4.600 4.600 0 0 1 4.600 4.600C12.600 8 9 10.500 8.500 16h-1C7 10.500 3.400 8 3.400 5.100A4.600 4.600 0 0 1 8 .5z" fill="#b5b5b5" stroke="#7d7d7d" />],
  ["Draw a circle", <circle key="c" cx="8" cy="8" r="6" fill="#b5b5b5" stroke="#858585" strokeWidth="1.500" />],
  ["Draw a shape", <path key="s" d="M.5 1.500L7.500 6.500 15.500 5l-1.500 6.500L3.500 14.500z" fill="#8a8a8a" stroke="#000" strokeWidth="2.200" />],
  ["Draw a line", <path key="l" d="M-.5 14l6-7.500L9 11.500 16.500 1.500" fill="none" stroke="#8f8f8f" strokeWidth="1.300" />],
  ["Draw a rectangle", <path key="r" d="M2 2h12v12H2z" fill="#b5b5b5" stroke="#858585" strokeWidth="1.500" />],
];
const Fullscreen = () => (
  <svg width="21" height="21" viewBox="0 0 21 21" fill="none" stroke="#666" strokeWidth="3" aria-hidden="true"><path d="M7 1.500H1.500V7M14 1.500h5.500V7M7 19.500H1.500V14M14 19.500h5.500V14" /></svg>
);
const Pegman = () => (
  <svg width="22" height="36" viewBox="0 0 66 108" aria-hidden="true">
    <path d="M14 40Q33 30 52 40L62 76 54 80 47 66V105H36V80H30V105H19V66L12 80 4 76Z" fill="#fbb32b" stroke="#d98a1a" strokeWidth="3" />
    <path d="M20 37h26L33 54Z" fill="#e2732a" />
    <circle cx="33" cy="19" r="16" fill="#fcc02e" stroke="#d98a1a" strokeWidth="3" />
  </svg>
);
const Sign = ({ plus }) => (
  <svg width="21" height="21" viewBox="0 0 21 21" fill="#666" aria-hidden="true">
    <path d="M0 8h21v5H0z" />
    {plus && <path d="M8 0h5v21H8z" />}
  </svg>
);
const Ogl = () => (
  <svg width="42" height="18" viewBox="0 0 42 18" role="img" aria-label="OGL">
    <text x="-1" y="17" fontSize="22" fontWeight="900" fontFamily="Inter, sans-serif" fill="#454a4d" stroke="#454a4d">
      <tspan>O</tspan><tspan x="13">G</tspan><tspan x="28">L</tspan>
    </text>
  </svg>
);
const Crest = () => (
  <svg width="128" height="104" viewBox="54 42 384 312" fill="#6d777a" aria-hidden="true">
    {/* crown */}
    <path d="M236 45h10v7h7v9h-7v12h-10V61h-7v-9h7z" />
    <path d="M204 132h74v-7q-37-10-74 0z" />
    <path d="M206 122C186 100 184 76 208 73q20-2 32 9 14-11 34-9c23 3 20 27 2 49" fill="none" stroke="#6d777a" strokeWidth="5" />
    <path d="M241 74v40M206 112l8-16 8 12 10-12 9 14 9-14 10 12 8-12 8 16-2 10q-33-8-66 0z" stroke="#6d777a" strokeWidth="3" />
    <g><circle cx="196" cy="82" r="5" /><circle cx="208" cy="73" r="5" /><circle cx="224" cy="76" r="5" /><circle cx="259" cy="76" r="5" /><circle cx="274" cy="74" r="5" /><circle cx="287" cy="84" r="5" /></g>
    {/* garter and shield */}
    <ellipse cx="243" cy="209" rx="61" ry="74" />
    <ellipse cx="243" cy="206" rx="42" ry="54" fill="#dee0e2" />
    <path d="M205 165q38-22 76 0v44q-2 36-38 50-36-14-38-50z" fill="#8a9295" />
    <path d="M243 156v102M204 206h78M212 172h24M212 184h24M212 196h24M254 218h20M254 230h16M250 242h12M214 222l10-10 10 10v20M252 170l22 24M274 170l-22 24" stroke="#dee0e2" strokeWidth="4" fill="none" />
    <path id="garter" d="M193 232A52 64 0 1 1 293 232" fill="none" />
    <text fontSize="19" fontWeight="700" fill="#dee0e2" fontFamily="Roboto, sans-serif"><textPath href="#garter" startOffset="12">SOIT QUI MAL Y PENSE</textPath></text>
    <path d="M205 266q38 26 76 0" fill="none" stroke="#dee0e2" strokeWidth="6" strokeDasharray="8 10" />
    {/* lion */}
    <path d="M108 80l-2-14 8-4 6 8 6-12 8 0 4 12 8-7 6 5-3 13z" />
    <path d="M110 84q22-8 44 0 10 10 14 26l12 24 10 22-4 22-14 20 4 26 14 20 8 10-12 6-22-10-10-16-16-16-14 18-22 22-6 14 4 16-16 10-12-10 2-26 10-26 16-20-2-26 8-24 2-24-8-12 2-18 6-8z" />
    <path d="M126 102l14-2M134 122l14 2" stroke="#dee0e2" strokeWidth="4" />
    <path d="M76 292l40 14-6-10-20-14zM160 238l28 26-20 4-14-10z" />
    <path d="M98 222C66 226 66 202 84 186q22-18 18-30-10-8-24 8-12 12-18 24" fill="none" stroke="#6d777a" strokeWidth="8" />
    {/* unicorn */}
    <path d="M320 52l24 40-5 3z" stroke="#6d777a" strokeWidth="3" />
    <path d="M344 92l14-10 10 6 12 2 12 18 6 20-6 14 2 20 12 24 4 30-14 30-14 14 8 20 4 20-14 10-6-30-10-20-14-26-22-6-24 18-12 4 2-12 18-16 8-20-4-24-24 4-12-14-10-16 12-8 14 14 20-4 12-12-4-28-14 2-10-4 8-16z" />
    <path d="M338 148q20 16 46 12M336 158q22 14 48 12" fill="none" stroke="#dee0e2" strokeWidth="3" />
    <path d="M396 224C430 226 430 206 414 190q-22-18-12-28 12-6 20 10 6 16 16 18" fill="none" stroke="#6d777a" strokeWidth="7" />
    <g fill="none" stroke="#6d777a" strokeWidth="3"><circle cx="378" cy="224" r="7" /><circle cx="388" cy="250" r="7" /><circle cx="420" cy="267" r="9" /><circle cx="404" cy="271" r="6" /><circle cx="392" cy="280" r="7" /><circle cx="368" cy="266" r="7" /><circle cx="378" cy="280" r="6" /><circle cx="314" cy="158" r="7" /><circle cx="322" cy="144" r="6" /></g>
    {/* motto scroll */}
    <path d="M96 312q40 6 78-34l14 14q-24 34-66 38z" />
    <path d="M386 312q-40 6-84-34l-8 14q24 34 64 38z" />
    <path d="M182 318q60 22 122-2l-6 30q-54 18-110 0z" />
    <path d="M190 276l-6 22 14 18 20 4M294 276l8 20-14 20-20 6" fill="none" stroke="#6d777a" strokeWidth="6" />
    <path d="M241 286l8 12-4 8h12l-4 8h-24l-4-8h12l-4-8zM238 306h6v20h-6z" />
    <g fontSize="20" fontWeight="700" fill="#dee0e2" fontFamily="Roboto, sans-serif">
      <text x="242" y="348" textAnchor="middle">ET MON</text>
      <text transform="translate(129 326) rotate(-32)">DIEU</text>
      <text transform="translate(300 292) rotate(36)">DROIT</text>
    </g>
  </svg>
);

export default function App() {
  const crumbs = ["Academies Enterprise Trust: London", "Next cycle (2020 – 2021)", "Locations"];
  const links = ["Video (YouTube)", "Cycles", "New location", "Clear data"];
  return (
    <Shell>
      <Global />
      <Page>
        <Header>
          <HeaderGrid>
            <Brand href="#"><Crown />GOV.UK</Brand>
            <ServiceNav>
              <ServiceLink href="#" $large>Publish teacher training courses</ServiceLink>
              <ServiceLink href="#">Sign out (Jane Doe)</ServiceLink>
            </ServiceNav>
          </HeaderGrid>
        </Header>

        <Container>
          <BlueBar />
          <Phase>
            <Tag>PROTOTYPE</Tag>
            <span>This is a prototype of a new service. Some parts of this prototype do not work yet.</span>
          </Phase>
          <nav aria-label="Breadcrumb">
            <Crumbs>
              {crumbs.map((c, i) => (
                <Crumb key={c}>{i > 0 && <Chevron />}<TextLink href="#">{c}</TextLink></Crumb>
              ))}
            </Crumbs>
          </nav>

          <main>
            <Title>Academies Enterprise Trust: Aylward Academy</Title>
            <Tabs>
              <Tab><a href="#edit">Edit location</a></Tab>
              <Tab $active><a href="#region" aria-current="page">The region you work within</a></Tab>
            </Tabs>

            <Heading>Show us the area covered by the schools you work with</Heading>
            <Copy>
              <Lines $first><Line /><Line /><Line $short /></Lines>
              <SubHeading>Improving search results</SubHeading>
              <Lines><Line /><Line $short /></Lines>
            </Copy>

            <MapFrame>
              <MapArt />
              <TypeSwitch>
                <TypeButton $on>Map</TypeButton>
                <TypeButton>Satellite</TypeButton>
              </TypeSwitch>
              <DrawTools>
                {TOOLS.map(([label, icon]) => (
                  <DrawButton key={label} aria-label={label}>
                    <svg width="18" height="18" viewBox="-1 -1 18 18" aria-hidden="true">{icon}</svg>
                  </DrawButton>
                ))}
              </DrawTools>
              <SideControl $top={12}>
                <SideButton aria-label="Full screen"><Fullscreen /></SideButton>
              </SideControl>
              <SideControl $bottom={161}>
                <SideButton aria-label="Street View"><Pegman /></SideButton>
              </SideControl>
              <SideControl $bottom={28}>
                <SideButton aria-label="Zoom in"><Sign plus /></SideButton>
                <SideButton aria-label="Zoom out"><Sign /></SideButton>
              </SideControl>
              <Attribution>
                <Credit>Map data ©2020 Google</Credit>
                <Credit><a href="#terms">Terms of Use</a></Credit>
                <Credit><a href="#report">Report a map error</a></Credit>
              </Attribution>
            </MapFrame>

            <Submit aria-label="Save" />
          </main>
        </Container>

        <Footer>
          <FooterRow>
            <div>
              <FooterLinks>
                {links.map((l) => <li key={l}><TextLink href="#" $color="#454a4d">{l}</TextLink></li>)}
              </FooterLinks>
              <Licence>
                <Ogl />
                <span>
                  All content is available under the <TextLink href="#" $color="#454a4d">Open Government Licence v3.0</TextLink>, except where otherwise stated
                </span>
              </Licence>
            </div>
            <Copyright href="#"><Crest />© Crown copyright</Copyright>
          </FooterRow>
        </Footer>
      </Page>
      <Gutter aria-hidden="true">
        <Track $h={481} />
        <Track $h={250} />
      </Gutter>
      <EdgeHandle />
    </Shell>
  );
}
